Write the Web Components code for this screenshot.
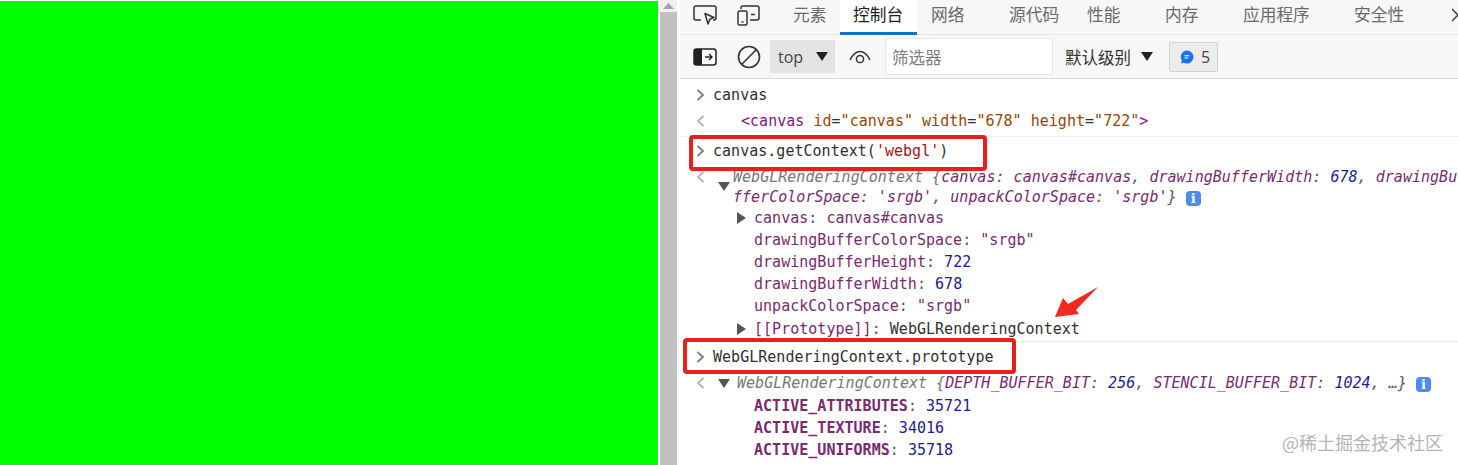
<!DOCTYPE html>
<html lang="zh">
<head>
<meta charset="utf-8">
<title>WebGLRenderingContext</title>
<style>
  html, body { margin: 0; height: 100%; overflow: hidden; background: #fff; }
  .line { display: block; height: 20.5px; line-height: 20.5px; white-space: nowrap; }
  .line.first { height: 19.5px; padding-top: 1px; }
</style>
</head>
<body>
<app-shell>
  <dev-tools>
    <tab-bar></tab-bar>
    <tool-bar></tool-bar>
    <console-row kind="in" height="32">canvas</console-row>
    <console-row kind="out" height="26" indent="28" lift="6" border><span style="color:#881280">&lt;canvas</span> <span style="color:#994500">id</span>=<span style="color:#994500">"canvas"</span> <span style="color:#994500">width</span>=<span style="color:#994500">"678"</span> <span style="color:#994500">height</span>=<span style="color:#994500">"722"</span><span style="color:#881280">&gt;</span></console-row>
    <console-row kind="in" height="29" lift="2"><span>canvas.getContext(<span style="color:#a31515">'webgl'</span>)</span></console-row>
    <console-row kind="out" arrow="down" height="41" indent="3" italic top>
      <span class="line first"><span style="color:#777">WebGLRenderingContext {</span><span style="color:#7a2a6e">canvas</span><span style="color:#555">:</span> <span style="color:#7a2a6e">canvas#canvas</span><span style="color:#555">,</span> <span style="color:#7a2a6e">drawingBufferWidth</span><span style="color:#555">:</span> <span style="color:#1c1c8c">678</span><span style="color:#555">,</span> <span style="color:#7a2a6e">drawingBu</span></span>
      <span class="line"><span style="color:#7a2a6e">fferColorSpace</span><span style="color:#555">:</span> <span style="color:#7a2a6e">'srgb'</span><span style="color:#555">,</span> <span style="color:#7a2a6e">unpackColorSpace</span><span style="color:#555">:</span> <span style="color:#7a2a6e">'srgb'</span><span style="color:#555">}</span> <info-badge></info-badge></span>
    </console-row>
    <prop-row arrow name="canvas" height="22"><span style="color:#7a2a6e">canvas#canvas</span></prop-row>
    <prop-row name="drawingBufferColorSpace" height="22"><span style="color:#7a2a6e">"srgb"</span></prop-row>
    <prop-row name="drawingBufferHeight" height="22"><span style="color:#1c1c8c">722</span></prop-row>
    <prop-row name="drawingBufferWidth" height="22"><span style="color:#1c1c8c">678</span></prop-row>
    <prop-row name="unpackColorSpace" height="22"><span style="color:#7a2a6e">"srgb"</span></prop-row>
    <prop-row arrow name="[[Prototype]]" height="25" lift="1" border><span style="color:#303030">WebGLRenderingContext</span></prop-row>
    <console-row kind="in" height="29">WebGLRenderingContext.prototype</console-row>
    <console-row kind="out" arrow="down" height="24" indent="7" italic><span><span style="color:#777">WebGLRenderingContext {</span><span style="color:#7a2a6e">DEPTH_BUFFER_BIT</span><span style="color:#555">:</span> <span style="color:#1c1c8c">256</span><span style="color:#555">,</span> <span style="color:#7a2a6e">STENCIL_BUFFER_BIT</span><span style="color:#555">:</span> <span style="color:#1c1c8c">1024</span><span style="color:#555">, …}</span> <info-badge></info-badge></span></console-row>
    <prop-row bold name="ACTIVE_ATTRIBUTES" height="22"><span style="color:#1c1c8c">35721</span></prop-row>
    <prop-row bold name="ACTIVE_TEXTURE" height="22"><span style="color:#1c1c8c">34016</span></prop-row>
    <prop-row bold name="ACTIVE_UNIFORMS" height="22"><span style="color:#1c1c8c">35718</span></prop-row>
  </dev-tools>
  <mark-up></mark-up>
</app-shell>

<script>
class AppShell extends HTMLElement {
  connectedCallback() {
    if (this.shadowRoot) return;
    this.attachShadow({ mode: "open" }).innerHTML = `
      <style>
        :host { display: grid; grid-template-columns: 658px 2px 17px 3px 1fr; height: 465px; position: relative; overflow: hidden; background: #fff; }
        .stage { background: #00ff00; margin-top: 1px; }
        .sb { display: grid; grid-template-rows: 12px 1fr; background: #f1f1f1; }
        .sb div { background: #c1c1c1; }
        .sb span { display: flex; justify-content: center; align-items: center; }
        svg { display: block; }
      </style>
      <div class="stage"></div>
      <div></div>
      <div class="sb"><span><svg width="11" height="6" viewBox="0 0 11 6"><path d="M5.5 0 11 6H0z" fill="#a3a3a3"/></svg></span><div></div></div>
      <div></div>
      <slot></slot>`;
  }
}

class DevTools extends HTMLElement {
  connectedCallback() {
    if (this.shadowRoot) return;
    this.attachShadow({ mode: "open" }).innerHTML = `
      <style>
        :host { display: flex; flex-direction: column; min-width: 0; overflow: hidden; background: #fff;
                font-family: "DejaVu Sans Mono", monospace; font-size: 15px; letter-spacing: .02px; color: #303030; }
      </style>
      <slot></slot>`;
  }
}

class TabBar extends HTMLElement {
  connectedCallback() {
    if (this.shadowRoot) return;
    // [label, width, left padding]
    const tabs = [
      ["元素", 78, 31], ["控制台", 77, 13], ["网络", 92, 14], ["源代码", 78, 0],
      ["性能", 78, 0], ["内存", 78, 0], ["应用程序", 111, 0], ["安全性", 80, 0]
    ].map(([t, w, p], i) => `<div class="tab${i == 1 ? " on" : ""}" style="width:${w}px;padding-left:${p}px">${t}</div>`).join("");
    this.attachShadow({ mode: "open" }).innerHTML = `
      <style>
        :host { display: flex; height: 35px; background: #f7f7f7; box-sizing: border-box; box-shadow: inset 0 -1px 0 #e4e4e4;
                font-family: "Noto Sans CJK SC", sans-serif; font-size: 16.7px; color: #6a6a6a; padding-left: 13px; align-items: stretch; }
        .icons { display: flex; gap: 20px; align-items: center; width: 69px; flex: none; padding-bottom: 5px; box-sizing: border-box; }
        svg { display: block; flex: none; }
        .tab { display: flex; align-items: center; box-sizing: border-box; padding-bottom: 7px; flex: none; white-space: nowrap; }
        .tab.on { background: #fff; color: #222; box-shadow: inset 0 -3px 0 #0f74c4; }
        .close { margin-left: 18px; align-self: center; margin-bottom: 6px; }
      </style>
      <div class="icons">
        <svg width="24" height="20" viewBox="0 0 24 20" fill="none" stroke="#333" stroke-width="1.5"><path d="M8 15H3a2 2 0 0 1-2-2V3a2 2 0 0 1 2-2h18a2 2 0 0 1 2 2v10a2 2 0 0 1-2 2h-1"/><path d="M12 8.500l9 4-4 1.500-2 5z" stroke-linejoin="round"/></svg>
        <svg width="23" height="21" viewBox="0 0 23 21" fill="none" stroke="#333" stroke-width="1.5"><rect x="1" y="6" width="9" height="14" rx="1.500"/><path d="M4 4V3a2 2 0 0 1 2-2h14a2 2 0 0 1 2 2v10a2 2 0 0 1-2 2h-7"/><path d="M14 9.500h4M4.500 17h2"/></svg>
      </div>
      ${tabs}
      <svg class="close" width="8" height="14" viewBox="0 0 8 14" fill="none" stroke="#333" stroke-width="1.400"><path d="M0 1l12 12M12 1 0 13"/></svg>`;
  }
}

class ToolBar extends HTMLElement {
  connectedCallback() {
    if (this.shadowRoot) return;
    this.attachShadow({ mode: "open" }).innerHTML = `
      <style>
        :host { display: flex; align-items: center; height: 44px; background: #f7f7f7; border-bottom: 1px solid #d9d9d9; box-sizing: border-box; padding: 0 0 0 13px;
                font-family: "Noto Sans CJK SC", sans-serif; font-size: 16px; color: #333; }
        svg { display: block; flex: none; }
        .top { display: flex; align-items: center; background: #e3e3e3; width: 65px; height: 33px; box-sizing: border-box; padding-left: 8px; margin-left: 9px; font-family: "Open Sans", sans-serif; font-size: 16px; color: #444; gap: 13px; }
        .filter { width: 166px; height: 35px; background: #fff; border-radius: 3px; box-shadow: 0 0 0 1px #e6e6e6; margin-left: 15px; box-sizing: border-box; padding-left: 6px; line-height: 37px; color: #7c7c7c; font-size: 16.5px; }
        .level { margin-left: 13px; display: flex; align-items: center; gap: 10px; width: 104px; font-size: 16.5px; }
        .count { display: flex; align-items: center; gap: 7px; width: 49px; height: 30px; box-sizing: border-box; background: #ececec; border: 1px solid #d3d3d3; border-radius: 2px; padding-left: 10px; font-family: "Open Sans", sans-serif; font-size: 16px; color: #444; }
      </style>
      <svg width="24" height="18" viewBox="0 0 24 18"><rect x="1" y="1" width="22" height="16" rx="2.5" fill="#fff" stroke="#222" stroke-width="1.5"/><path d="M3 1h6v16H3a2 2 0 0 1-2-2V3a2 2 0 0 1 2-2z" fill="#222"/><path d="M12 9h7M16 6l3 3-3 3" fill="none" stroke="#222" stroke-width="1.4"/></svg>
      <svg style="margin-left:20px" width="24" height="24" viewBox="0 0 24 24" fill="none" stroke="#333" stroke-width="1.6"><circle cx="12" cy="12" r="10.5"/><path d="M4.8 19.200 19.200 4.800"/></svg>
      <div class="top"><span>top</span><svg width="12" height="9" viewBox="0 0 12 9"><path d="M0 0h12L6 9z" fill="#222"/></svg></div>
      <svg style="margin-left:14px" width="22" height="14" viewBox="0 0 22 14" fill="none" stroke="#333" stroke-width="1.500"><path d="M1 10C4 4 7.500 1.500 11 1.500S18 4 21 10"/><circle cx="11" cy="9" r="3.600"/></svg>
      <div class="filter">筛选器</div>
      <div class="level"><span>默认级别</span><svg width="12" height="9" viewBox="0 0 12 9"><path d="M0 0h12L6 9z" fill="#222"/></svg></div>
      <div class="count"><svg width="14" height="14" viewBox="0 0 14 14"><path d="M7 .5a6.500 6.500 0 1 1-3 12.300L1 13.500l.8-3A6.500 6.500 0 0 1 7 .5z" fill="#1a73e8"/><path d="M4.500 5.800h5M4.500 8h3.500" stroke="#fff" stroke-width="1.100"/></svg><span>5</span></div>`;
  }
}

class ConsoleRow extends HTMLElement {
  connectedCallback() {
    if (this.shadowRoot) return;
    const kind = this.getAttribute("kind");
    const indent = +(this.getAttribute("indent") || 0);
    const h = this.getAttribute("height") || 22;
    const lift = +(this.getAttribute("lift") || 0);
    let mark = "";
    if (kind === "in") mark = `<svg width="9" height="12" viewBox="0 0 9 12" fill="none" stroke="#808080" stroke-width="1.900"><path d="M1.500 1 7 6l-5.500 5"/></svg>`;
    if (kind === "out") mark = `<svg width="9" height="12" viewBox="0 0 9 12" fill="none" stroke="#b4b4b4" stroke-width="1.900"><path d="M7.500 1 2 6l5.500 5"/></svg>`;
    const tri = this.getAttribute("arrow") === "down"
      ? `<svg class="tri" width="12" height="9" viewBox="0 0 12 9"><path d="M0 0h12L6 9z" fill="#555"/></svg>` : "";
    this.attachShadow({ mode: "open" }).innerHTML = `
      <style>
        :host { display: flex; align-items: center; height: ${h}px; box-sizing: border-box; white-space: nowrap; padding: 0 0 ${lift}px 16px; overflow: hidden;
                ${this.hasAttribute("border") ? "border-bottom: 1px solid #ececec;" : ""}
                ${this.hasAttribute("italic") ? "font-style: italic;" : ""} }
        .mark { width: 17px; flex: none; display: flex; ${this.hasAttribute("top") ? "align-self: flex-start; padding-top: 5px;" : ""} }
        .tri { flex: none; margin-left: 5px; margin-right: ${indent}px; }
        .text { margin-left: ${tri ? 0 : indent}px; }
        svg { display: block; }
      </style>
      <div class="mark">${mark}</div>${tri}<div class="text"><slot></slot></div>`;
  }
}

class PropRow extends HTMLElement {
  connectedCallback() {
    if (this.shadowRoot) return;
    const h = this.getAttribute("height") || 22;
    const name = this.getAttribute("name");
    const lift = +(this.getAttribute("lift") || 0);
    const tri = this.hasAttribute("arrow")
      ? `<svg width="9" height="12" viewBox="0 0 9 12"><path d="M0 0l9 6-9 6z" fill="#555"/></svg>` : "";
    this.attachShadow({ mode: "open" }).innerHTML = `
      <style>
        :host { display: flex; align-items: center; height: ${h}px; box-sizing: border-box; white-space: nowrap; padding: 0 0 ${lift}px 57px;
                ${this.hasAttribute("border") ? "border-bottom: 1px solid #ececec;" : ""} }
        .tri { width: 17px; flex: none; display: flex; }
        .name { color: #7a2a6e; ${this.hasAttribute("bold") ? "font-weight: 700;" : ""} }
        svg { display: block; }
      </style>
      <div class="tri">${tri}</div><span class="name">${name}</span><span style="color:#555">:&nbsp;</span><slot></slot>`;
  }
}

class InfoBadge extends HTMLElement {
  connectedCallback() {
    if (this.shadowRoot) return;
    this.attachShadow({ mode: "open" }).innerHTML = `
      <style>
        :host { display: inline-flex; width: 15px; height: 15px; background: #4a8cf0; border-radius: 4px; color: #fff; vertical-align: -1px; align-items: center; justify-content: center;
                font: normal 700 13px "DejaVu Serif", serif; margin-left: 0; line-height: 15px; }
      </style>i`;
  }
}

// annotations lying over the console: red boxes, arrow, watermark
class MarkUp extends HTMLElement {
  connectedCallback() {
    if (this.shadowRoot) return;
    this.attachShadow({ mode: "open" }).innerHTML = `
      <style>
        :host { position: absolute; inset: 0; pointer-events: none; }
        .box { position: absolute; border: 4px solid #ea1f1c; border-radius: 4px; box-sizing: border-box; }
        svg { position: absolute; }
        .wm { position: absolute; left: 1282px; top: 429px; font: 18px "Noto Sans CJK SC", sans-serif; color: #a8a8a8; opacity: .85; white-space: nowrap; }
      </style>
      <div class="box" style="left:689px;top:135px;width:298px;height:36px"></div>
      <div class="box" style="left:683px;top:338px;width:333px;height:36px"></div>
      <svg style="left:1052px;top:285px" width="50" height="36" viewBox="0 0 50 36"><path d="M46 2 24 25l3 4-24 3 8-19 5 6z" fill="#f02a1e"/></svg>
      <div class="wm">@稀土掘金技术社区</div>`;
  }
}

customElements.define("app-shell", AppShell);
customElements.define("dev-tools", DevTools);
customElements.define("tab-bar", TabBar);
customElements.define("tool-bar", ToolBar);
customElements.define("console-row", ConsoleRow);
customElements.define("prop-row", PropRow);
customElements.define("info-badge", InfoBadge);
customElements.define("mark-up", MarkUp);
</script>
</body>
</html>
